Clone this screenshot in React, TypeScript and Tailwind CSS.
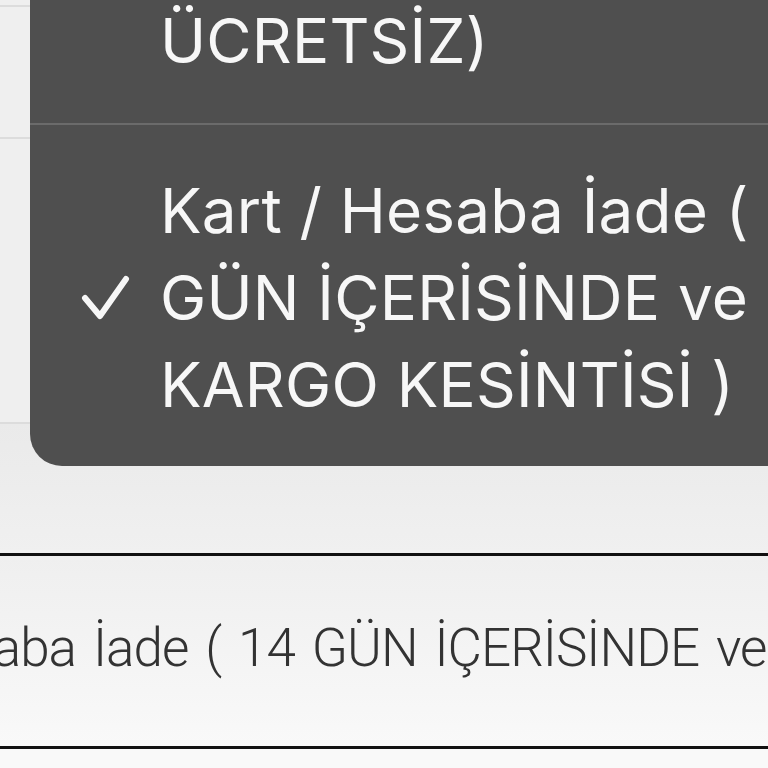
const menuFont = { fontFamily: "Inter, 'Noto Sans', sans-serif" };
const fieldFont = { fontFamily: "Roboto, 'Open Sans', sans-serif" };

function CheckMark() {
    return (
        <svg width="52" height="48" viewBox="0 0 52 48" fill="none" stroke="currentColor" strokeWidth="6" strokeLinecap="round" strokeLinejoin="round">
            <path d="M5 24 L20 42 L46 5" />
        </svg>
    );
}

function PickerMenu() {
    return (
        <div
            className="absolute left-[30px] top-0 right-[-60px] h-[466px] overflow-hidden rounded-bl-[32px] bg-[#4f4f4f] text-[#f7f7f7]"
            style={menuFont}
        >
            <div className="h-[123px] overflow-hidden">
                <div className="-mt-[3px] pl-[130px] text-[62px] leading-[87px] tracking-[0.2px] whitespace-nowrap">ÜCRETSİZ)</div>
            </div>
            <div className="h-[1.5px] bg-[#6b6b6b]" />
            <div className="flex pt-[42px]">
                <div className="flex w-[130px] shrink-0 items-center pl-[50px] pt-[2px]">
                    <CheckMark />
                </div>
                <div className="text-[62px] leading-[87px] tracking-[0.2px] whitespace-nowrap">
                    <div>Kart / Hesaba İade ( 14</div>
                    <div>GÜN İÇERİSİNDE ve</div>
                    <div>KARGO KESİNTİSİ )</div>
                </div>
            </div>
        </div>
    );
}

export default function App() {
    return (
        <div className="relative h-[768px] w-[768px] overflow-hidden bg-[#ededed]">
            <div className="h-[5px] bg-[#efefef]" />
            <div className="h-[2px] bg-[#dcdcdc]" />
            <div className="h-[130px] bg-[#efefef]" />
            <div className="h-[2px] bg-[#dcdcdc]" />
            <div className="h-[283px] bg-[#efefef]" />
            <div className="h-[2px] bg-[#dcdcdc]" />
            <div className="h-[129px] bg-gradient-to-b from-[#eaeaea] to-[#f0f0f0]" />
            <div className="h-[3px] bg-[#111]" />
            <div className="flex h-[190px] items-center overflow-hidden bg-gradient-to-b from-[#efefef] to-[#f9f9f9]">
                <div
                    className="-ml-[244px] -mt-[4px] whitespace-nowrap text-[53px] font-light tracking-[-1px] [word-spacing:5px] text-[#333]"
                    style={fieldFont}
                >
                    Kart / Hesaba İade ( 14 GÜN İÇERİSİNDE ve KARGO KESİNTİSİ )
                </div>
            </div>
            <div className="h-[3px] bg-[#111]" />
            <div className="h-[40px] bg-[#f9f9f9]" />
            <PickerMenu />
        </div>
    );
}
